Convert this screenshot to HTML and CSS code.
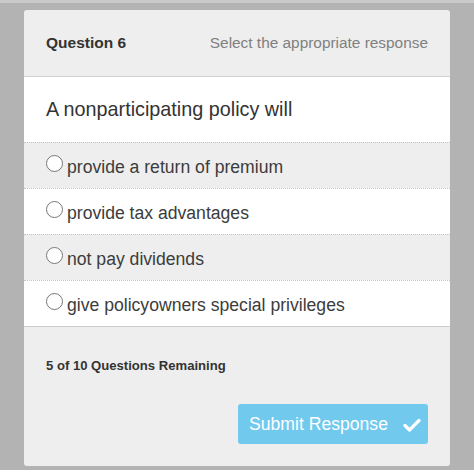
FILE: index.html
```html
<!DOCTYPE html>
<html lang="en">
<head>
    <meta charset="UTF-8">
    <meta name="viewport" content="width=device-width, initial-scale=1.0">
    <title>Question 6</title>
    <link rel="stylesheet" href="styles.css">
</head>
<body>
    <div class="page">
        <div class="quiz-card">
            <div class="quiz-header">
                <span class="question-number">Question 6</span>
                <span class="instructions">Select the appropriate response</span>
            </div>
            <div class="question-text">A nonparticipating policy will</div>

            <!-- Answer choices -->
            <div class="choices">
                <label class="choice">
                    <span class="radio"></span>
                    <span class="choice-label">provide a return of premium</span>
                </label>
                <label class="choice">
                    <span class="radio"></span>
                    <span class="choice-label">provide tax advantages</span>
                </label>
                <label class="choice">
                    <span class="radio"></span>
                    <span class="choice-label">not pay dividends</span>
                </label>
                <label class="choice">
                    <span class="radio"></span>
                    <span class="choice-label">give policyowners special privileges</span>
                </label>
            </div>

            <div class="quiz-footer">
                <p class="remaining">5 of 10 Questions Remaining</p>
                <button class="submit-btn" type="button">
                    Submit Response
                    <svg class="check" width="18" height="14" viewBox="0 0 18 14">
                        <path d="M2 7.5 L6.5 12 L16 2.5" fill="none" stroke="#fff" stroke-width="3.2" stroke-linecap="round" stroke-linejoin="round"/>
                    </svg>
                </button>
            </div>
        </div>
    </div>
</body>
</html>
```

FILE: styles.css
```css
    body {
        margin: 0;
        background-color: #fff;
        font-family: "Liberation Sans", Arial, sans-serif;
    }
    .page {
        height: 470px;
        background-color: #b3b3b3;
        border-top: 3px solid #c9c9c9;
        padding: 7px 24px 0 24px;
        box-sizing: border-box;
    }
    .quiz-card {
        width: 426px;
        height: 456px;
        background: #eeeeee;
        border-radius: 3px;
        overflow: hidden;
        display: flex;
        flex-direction: column;
    }
    .quiz-header {
        display: flex;
        justify-content: space-between;
        align-items: center;
        height: 67px;
        padding: 0 22px;
        border-bottom: 1px solid #d2d2d2;
        box-sizing: border-box;
    }
    .question-number {
        font-size: 15.5px;
        font-weight: bold;
        color: #333;
    }
    .instructions {
        font-size: 15.4px;
        color: #808080;
    }
    .question-text {
        height: 65px;
        background: white;
        padding: 0 22px;
        display: flex;
        align-items: center;
        font-size: 19.8px;
        color: #333;
        box-sizing: border-box;
    }
    .choice {
        display: flex;
        align-items: center;
        height: 46px;
        padding: 3px 22px 0 22px;
        border-top: 1px dotted #c4c4c4;
        box-sizing: border-box;
        cursor: pointer;
    }
    .choice:nth-child(odd) {
        background: #eeeeee;
    }
    .choice:nth-child(even) {
        background: white;
    }
    .choice:last-child {
        border-bottom: 1px solid #cccccc;
        height: 47px;
    }
    .radio {
        width: 15px;
        height: 15px;
        border: 1.5px solid #777;
        border-radius: 50%;
        background: white;
        margin-right: 4px;
        margin-top: -7px;
        flex-shrink: 0;
    }
    .choice-label {
        font-size: 17.6px;
        color: #3c3c3c;
    }
    .quiz-footer {
        flex: 1;
        display: flex;
        flex-direction: column;
        padding: 0 22px;
    }
    .remaining {
        margin: 31px 0 0 0;
        font-size: 13.1px;
        font-weight: bold;
        color: #333;
    }
    .submit-btn {
        align-self: flex-end;
        margin-top: 31px;
        width: 190px;
        height: 40px;
        border: none;
        border-radius: 3px;
        background: #72c9ee;
        color: white;
        font-family: "Liberation Sans", Arial, sans-serif;
        font-size: 17.6px;
        display: flex;
        align-items: center;
        justify-content: center;
        gap: 15px;
        padding: 0 0 0 4px;
    }
    .check {
        margin-top: 1px;
    }
```
